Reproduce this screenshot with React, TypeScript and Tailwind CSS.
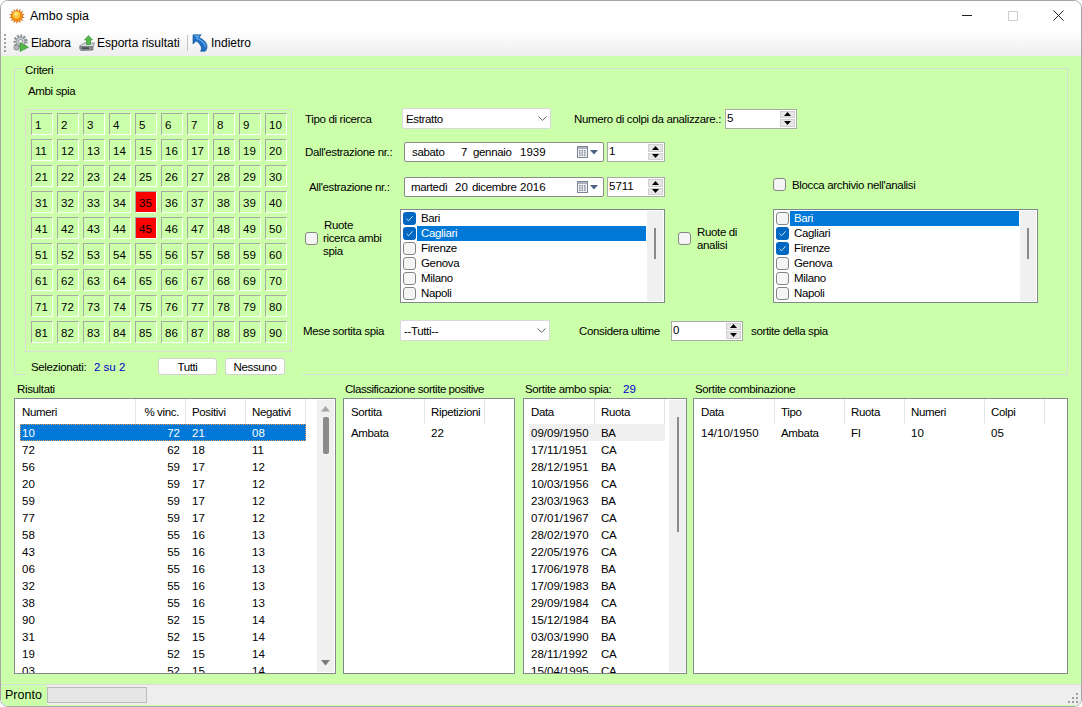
import React from "react";

const FONT = "font-['Liberation_Sans',Arial,sans-serif]";

function Sun() {
  const rays = Array.from({ length: 14 }, (_, i) => (i * 360) / 14);
  return (
    <svg width="16" height="16" viewBox="0 0 16 16">
      {rays.map((a) => (
        <polygon key={a} points="8,0 9.2,3.5 6.8,3.5" fill="#c9660f" transform={`rotate(${a} 8 8)`} />
      ))}
      <circle cx="8" cy="8" r="5.6" fill="#f08a14" />
      <circle cx="7.5" cy="7" r="3.7" fill="#ffc83a" />
      <circle cx="7" cy="6" r="1.8" fill="#ffe58a" />
    </svg>
  );
}

function Gears() {
  return (
    <svg width="16" height="18" viewBox="0 0 16 18">
      <circle cx="7.5" cy="7.5" r="5.8" fill="none" stroke="#8d9297" strokeWidth="2.6" strokeDasharray="2 1.3" />
      <circle cx="7.5" cy="7.5" r="4.5" fill="#c6cacd" stroke="#7a8085" strokeWidth="0.8" />
      <circle cx="7.5" cy="7.5" r="2" fill="#f4f4f4" stroke="#6d7276" strokeWidth="0.6" />
      <circle cx="3.5" cy="13.5" r="2.6" fill="#b3b7ba" stroke="#7a8085" strokeWidth="0.8" />
      <polygon points="7,8.8 15.5,13.2 7,17.5" fill="#55b947" stroke="#2f8a2c" strokeWidth="0.6" />
    </svg>
  );
}

function ExportIcon() {
  return (
    <svg width="16" height="18" viewBox="0 0 16 18">
      <polygon points="0.5,12 5,9 15.5,9 14,13 2,14" fill="#d5d8da" stroke="#6e7478" strokeWidth="0.7" />
      <polygon points="0.8,12.5 14,12.8 14,16 2,16.5 0.8,15" fill="#8a9094" stroke="#555b5f" strokeWidth="0.6" />
      <rect x="3" y="13.5" width="7" height="1.2" fill="#2f3336" />
      <polygon points="9.5,1.5 13.5,6 11.5,6 11.5,10.5 7.5,10.5 7.5,6 5.5,6" fill="#55b947" stroke="#2f8a2c" strokeWidth="0.6" />
    </svg>
  );
}

function BackIcon() {
  return (
    <svg width="16" height="18" viewBox="0 0 16 18">
      <path d="M1 0.8 L9.2 0.8 L7 3.4 C11.5 5.5 15 8.5 15 12.5 C15 14.5 14.4 16 13.2 17.3 L8.6 17.3 C10.6 14 9 10.5 4.2 7 L1 10 Z" fill="#1f6fc4" stroke="#124f96" strokeWidth="0.6" />
      <path d="M2.2 2 L6.6 2 L4.6 4.2 C9 6 13.2 9 13.4 13" fill="none" stroke="#6db4ee" strokeWidth="1.1" />
    </svg>
  );
}

function Check({ on = false }: { on?: boolean }) {
  return on ? (
    <span className="w-[13px] h-[13px] shrink-0 rounded-[3px] bg-[#0067c0] flex items-center justify-center">
      <svg width="9" height="9" viewBox="0 0 9 9">
        <path d="M1.5 4.8 L3.6 6.8 L7.6 2.2" fill="none" stroke="#dbe9f7" strokeWidth="0.9" />
      </svg>
    </span>
  ) : (
    <span className="block w-[13px] h-[13px] shrink-0 rounded-[3px] bg-[#f5f5f5] border border-[#858585]" />
  );
}

function Spin({ value, w }: { value: string; w: string }) {
  return (
    <div className={`${w} h-[20px] bg-white border border-[#a9a9a9] flex tracking-normal`}>
      <span className="flex-1 pl-[1px] leading-[14px] pt-[1px]">{value}</span>
      <div className="w-[15px] mr-[1px] my-[1px] flex flex-col gap-[1px]">
        <div className="flex-1 bg-[#e6e6e6] border border-[#d0d0d0] flex items-center justify-center">
          <svg width="7" height="4" viewBox="0 0 7 4"><polygon points="3.5,0 7,4 0,4" fill="#000" /></svg>
        </div>
        <div className="flex-1 bg-[#e6e6e6] border border-[#d0d0d0] flex items-center justify-center">
          <svg width="7" height="4" viewBox="0 0 7 4"><polygon points="0,0 7,0 3.5,4" fill="#000" /></svg>
        </div>
      </div>
    </div>
  );
}

function Combo({ value, w }: { value: string; w: string }) {
  return (
    <div className={`${w} h-[21px] bg-white border border-[#d9d9d9] rounded-[2px] flex items-center pl-[3px] pr-[3px] justify-between`}>
      <span>{value}</span>
      <svg width="9" height="5" viewBox="0 0 9 5"><path d="M0.5 0.5 L4.5 4.3 L8.5 0.5" fill="none" stroke="#606060" strokeWidth="1" /></svg>
    </div>
  );
}

function DateBox({ children, pl }: { children: React.ReactNode; pl: string }) {
  return (
    <div className={`w-[200px] h-[20px] bg-white border border-[#8a8a8a] rounded-[2px] flex items-center ${pl}`}>
      {children}
      <svg width="12" height="12" viewBox="0 0 12 12" className="ml-auto">
        <rect x="0.5" y="0.5" width="10" height="11" fill="#eef0f3" stroke="#7d8690" />
        <rect x="1" y="1" width="9" height="2" fill="#aab3bd" />
        {[2, 4.5, 7].map((x) => [4, 6.2, 8.4].map((y) => <rect key={`${x}${y}`} x={x} y={y} width="1.6" height="1.5" fill="#8a94a0" />))}
      </svg>
      <svg width="8" height="5" viewBox="0 0 8 5" className="ml-[1px] mr-[5px]"><polygon points="0,0 8,0 4,4.5" fill="#4d6185" /></svg>
    </div>
  );
}

const WHEELS = ["Bari", "Cagliari", "Firenze", "Genova", "Milano", "Napoli"];

function CheckList({ checked, selected }: { checked: string[]; selected: string }) {
  return (
    <div className="w-[265px] h-[94px] bg-white border border-[#828790] flex p-[1px]">
      <div className="flex-1 flex flex-col">
        {WHEELS.map((n) => (
          <div key={n} className="h-[15px] flex items-center pl-[1px] gap-[1px]">
            <Check on={checked.includes(n)} />
            <span className={`flex-1 h-[15px] leading-[15px] pl-[4px] ${selected === n ? "bg-[#0078d7] text-white" : ""}`}>{n}</span>
          </div>
        ))}
      </div>
      <div className="w-[16px] ml-[1px] bg-[#f0f0f0] flex justify-center">
        <div className="w-[2px] h-[31px] mt-[17px] bg-[#8a8a8a]" />
      </div>
    </div>
  );
}

function NumberGrid() {
  const nums = Array.from({ length: 90 }, (_, i) => i + 1);
  return (
    <div className="w-[267px] h-[243px] border border-[#dcdcdc] mt-[11px] pl-[5px] pt-[3px] grid grid-cols-[repeat(10,22px)] grid-rows-[repeat(9,22px)] gap-x-[4px] gap-y-[4px] tracking-normal">
      {nums.map((n) => (
        <div
          key={n}
          className={`border-t border-l border-t-[#a8a8a8] border-l-[#a8a8a8] border-r border-b border-r-white border-b-white pl-[3px] pt-[2px] flex items-center ${n === 35 || n === 45 ? "bg-[#ff0000]" : ""}`}
        >
          {n}
        </div>
      ))}
    </div>
  );
}

type Col = { label: string; w: string; right?: boolean };

function Header({ cols }: { cols: Col[] }) {
  return (
    <div className="flex h-[25px]">
      {cols.map((c, j) => (
        <div key={c.label} className={`${c.w} shrink-0 border-r border-[#e5e5e5] flex items-center pt-[1px] ${j === 0 ? "pl-[2px] pr-[6px]" : "px-[6px]"} ${c.right ? "justify-end" : ""}`}>
          {c.label}
        </div>
      ))}
    </div>
  );
}

function Rows({ cols, rows, sel, inactive }: { cols: Col[]; rows: string[][]; sel?: number; inactive?: boolean }) {
  return (
    <div className="flex flex-col">
      {rows.map((r, i) => {
        const active = sel === i && !inactive;
        const ghost = sel === i && inactive;
        return (
          <div key={i} className={`flex h-[17px] shrink-0 w-fit ${active ? "bg-[#0078d7] text-white outline-1 outline-dotted outline-offset-[-1px] outline-[#d99a5a]" : ""} ${ghost ? "bg-[#f0f0f0]" : ""}`}>
            {r.map((v, j) => (
              <div key={j} className={`${cols[j].w} shrink-0 ${j === 0 ? "pl-[2px] pr-[6px]" : "px-[6px]"} pt-[1px] leading-[16px] flex ${cols[j].right ? "justify-end" : ""} ${/^[\d/]+$/.test(v) ? "tracking-normal" : ""}`}>
                {v}
              </div>
            ))}
          </div>
        );
      })}
    </div>
  );
}

const RES_COLS: Col[] = [
  { label: "Numeri", w: "w-[116px]" },
  { label: "% vinc.", w: "w-[50px]", right: true },
  { label: "Positivi", w: "w-[60px]" },
  { label: "Negativi", w: "w-[60px]" },
];
const RES = [
  ["10", "72", "21", "08"], ["72", "62", "18", "11"], ["56", "59", "17", "12"], ["20", "59", "17", "12"],
  ["59", "59", "17", "12"], ["77", "59", "17", "12"], ["58", "55", "16", "13"], ["43", "55", "16", "13"],
  ["06", "55", "16", "13"], ["32", "55", "16", "13"], ["38", "55", "16", "13"], ["90", "52", "15", "14"],
  ["31", "52", "15", "14"], ["19", "52", "15", "14"], ["03", "52", "15", "14"],
];
const CL_COLS: Col[] = [
  { label: "Sortita", w: "w-[76px]" },
  { label: "Ripetizioni", w: "w-[60px]" },
];
const AMB_COLS: Col[] = [
  { label: "Data", w: "w-[66px]" },
  { label: "Ruota", w: "w-[70px]" },
];
const AMB = [
  ["09/09/1950", "BA"], ["17/11/1951", "CA"], ["28/12/1951", "BA"], ["10/03/1956", "CA"], ["23/03/1963", "BA"],
  ["07/01/1967", "CA"], ["28/02/1970", "CA"], ["22/05/1976", "CA"], ["17/06/1978", "BA"], ["17/09/1983", "BA"],
  ["29/09/1984", "CA"], ["15/12/1984", "BA"], ["03/03/1990", "BA"], ["28/11/1992", "CA"], ["15/04/1995", "CA"],
];
const CMB_COLS: Col[] = [
  { label: "Data", w: "w-[76px]" },
  { label: "Tipo", w: "w-[70px]" },
  { label: "Ruota", w: "w-[60px]" },
  { label: "Numeri", w: "w-[80px]" },
  { label: "Colpi", w: "w-[60px]" },
];

export default function App() {
  return (
    <div className={`${FONT} w-[1082px] h-[707px] overflow-hidden flex flex-col bg-white border border-[#a6a6a6] rounded-[8px] text-[11.5px] leading-[14px] tracking-[-0.35px] whitespace-nowrap text-black`}>
      {/* title bar */}
      <div className="h-[29px] shrink-0 flex items-center pl-[8px] bg-white tracking-normal">
        <Sun />
        <span className="ml-[5px] text-[12.5px]">Ambo spia</span>
        <div className="ml-auto flex items-center">
          <div className="w-[46px] flex justify-center"><div className="w-[10px] h-[1px] bg-[#222]" /></div>
          <div className="w-[46px] flex justify-center"><div className="w-[10px] h-[10px] border border-[#cfcfcf]" /></div>
          <div className="w-[45px] flex justify-center">
            <svg width="11" height="11" viewBox="0 0 11 11"><path d="M0.5 0.5 L10.5 10.5 M10.5 0.5 L0.5 10.5" stroke="#222" strokeWidth="1" /></svg>
          </div>
        </div>
      </div>
      {/* toolbar */}
      <div className="h-[26px] shrink-0 flex items-center bg-gradient-to-b from-[#ffffff] to-[#eeeeee] pl-[3px] text-[12px] tracking-normal">
        <div className="w-[3px] h-[18px] mr-[6px] border-l-2 border-dotted border-[#a0a0a0]" />
        <Gears />
        <span className="ml-[2px] w-[39px] tracking-[-0.25px]">Elabora</span>
        <span className="ml-[9px]"><ExportIcon /></span>
        <span className="ml-[2px] w-[81px]">Esporta risultati</span>
        <div className="w-[1px] h-[16px] bg-[#c4c4c4] ml-[9px] mr-[4px]" />
        <BackIcon />
        <span className="ml-[3px]">Indietro</span>
      </div>
      {/* body */}
      <div className="flex-1 min-h-0 bg-[#ccffaa] flex flex-col px-[13px] pt-[12px]">
        {/* Criteri group */}
        <div className="relative h-[307px] border border-[#d8dcd8] shrink-0 flex pl-[10px]">
          <span className="absolute -top-[6px] left-[8px] px-[2px] z-20 bg-[#ccffaa]">Criteri</span>
          <div className="w-[277px] -mb-[3px] bg-[#ccffaa] z-10 shrink-0 flex flex-col">
            <span className="mt-[15px] ml-[3px]">Ambi spia</span>
            <NumberGrid />
            <div className="flex items-center h-[17px] mt-[6px] pl-[6px]">
              <span className="w-[63px] shrink-0">Selezionati:</span>
              <span className="w-[64px] shrink-0 text-[#0000cc] tracking-normal">2 su 2</span>
              <button className="w-[59px] h-[17px] shrink-0 bg-white border border-[#d0d0d0] rounded-[3px]">Tutti</button>
              <button className="ml-[8px] w-[60px] h-[17px] shrink-0 bg-white border border-[#d0d0d0] rounded-[3px]">Nessuno</button>
            </div>
          </div>
          <div className="flex-1 min-w-0 flex flex-col pt-[39px]">
            <div className="flex items-center h-[21px] ml-[3px] [&>*]:shrink-0">
              <span className="w-[97px]">Tipo di ricerca</span>
              <Combo value="Estratto" w="w-[149px]" />
              <span className="ml-[23px] w-[151px]">Numero di colpi da analizzare.:</span>
              <Spin value="5" w="w-[72px]" />
            </div>
            <div className="flex items-center h-[20px] mt-[13px] ml-[3px] [&>*]:shrink-0">
              <span className="w-[99px]">Dall'estrazione nr.:</span>
              <DateBox pl="pl-[7px]">
                <span className="w-[49px] shrink-0">sabato</span>
                <span className="w-[12px] shrink-0 tracking-normal">7</span>
                <span className="w-[47px] shrink-0">gennaio</span>
                <span className="tracking-normal">1939</span>
              </DateBox>
              <span className="ml-[3px]"><Spin value="1" w="w-[58px]" /></span>
            </div>
            <div className="flex items-center h-[20px] mt-[15px] ml-[7px] [&>*]:shrink-0">
              <span className="w-[95px]">All'estrazione nr.:</span>
              <DateBox pl="pl-[6px]">
                <span className="w-[44px] shrink-0">martedì</span>
                <span className="w-[17px] shrink-0 tracking-normal">20</span>
                <span className="w-[48px] shrink-0">dicembre</span>
                <span className="tracking-normal">2016</span>
              </DateBox>
              <span className="ml-[3px]"><Spin value="5711" w="w-[58px]" /></span>
              <span className="ml-[108px] -mt-[6px]"><Check /></span>
              <span className="ml-[6px] -mt-[5px]">Blocca archivio nell'analisi</span>
            </div>
            <div className="flex items-start h-[94px] mt-[12px] ml-[3px] [&>*]:shrink-0">
              <span className="mt-[23px]"><Check /></span>
              <span className="w-[77px] ml-[5px] mt-[10px] leading-[13px]"><span className="ml-[1px]">Ruote</span><br />ricerca ambi<br />spia</span>
              <CheckList checked={["Bari", "Cagliari"]} selected="Cagliari" />
              <span className="ml-[13px] mt-[23px]"><Check /></span>
              <span className="w-[76px] ml-[6px] mt-[17px] leading-[13px]">Ruote di<br />analisi</span>
              <CheckList checked={["Cagliari", "Firenze"]} selected="Bari" />
            </div>
            <div className="flex items-center h-[21px] mt-[17px] ml-[1px] [&>*]:shrink-0">
              <span className="w-[97px]">Mese sortita spia</span>
              <Combo value="--Tutti--" w="w-[150px]" />
              <span className="ml-[29px] w-[92px]">Considera ultime</span>
              <Spin value="0" w="w-[72px]" />
              <span className="ml-[8px]">sortite della spia</span>
            </div>
          </div>
        </div>
        {/* results */}
        <div className="flex mt-[7px] flex-1 min-h-0 pb-[10px]">
          <div className="w-[322px] shrink-0 flex flex-col">
            <span className="h-[16px] ml-[3px] shrink-0">Risultati</span>
            <div className="flex-1 min-h-0 bg-white border border-[#828790] flex overflow-hidden pl-[5px]">
              <div className="flex-1 min-w-0 overflow-hidden">
                <Header cols={RES_COLS} />
                <Rows cols={RES_COLS} rows={RES} sel={0} />
              </div>
              <div className="w-[17px] mr-[1px] my-[1px] bg-[#f0f0f0] flex flex-col items-center shrink-0">
                <svg width="9" height="6" viewBox="0 0 9 6" className="mt-[6px]"><polygon points="4.5,0 9,5.5 0,5.5" fill="#a6a6a6" /></svg>
                <div className="w-[6px] h-[37px] mt-[5px] bg-[#8a8a8a] rounded-[2px]" />
                <svg width="9" height="6" viewBox="0 0 9 6" className="mt-auto mb-[6px]"><polygon points="0,0 9,0 4.5,5.5" fill="#7a7a7a" /></svg>
              </div>
            </div>
          </div>
          <div className="w-[172px] ml-[7px] shrink-0 flex flex-col">
            <span className="h-[16px] ml-[2px] shrink-0 tracking-[-0.45px]">Classificazione sortite positive</span>
            <div className="flex-1 min-h-0 bg-white border border-[#828790] overflow-hidden pl-[5px]">
              <Header cols={CL_COLS} />
              <Rows cols={CL_COLS} rows={[["Ambata", "22"]]} />
            </div>
          </div>
          <div className="w-[164px] ml-[8px] shrink-0 flex flex-col">
            <div className="h-[16px] ml-[2px] shrink-0 flex">
              <span className="w-[98px]">Sortite ambo spia:</span>
              <span className="text-[#0000cc] tracking-normal">29</span>
            </div>
            <div className="flex-1 min-h-0 bg-white border border-[#828790] flex overflow-hidden pl-[5px]">
              <div className="flex-1 min-w-0 overflow-hidden">
                <Header cols={AMB_COLS} />
                <Rows cols={AMB_COLS} rows={AMB} sel={0} inactive />
              </div>
              <div className="w-[17px] my-[1px] bg-[#f0f0f0] flex justify-center shrink-0">
                <div className="w-[2px] h-[115px] mt-[17px] bg-[#8a8a8a]" />
              </div>
            </div>
          </div>
          <div className="flex-1 ml-[6px] min-w-0 flex flex-col">
            <span className="h-[16px] ml-[2px] shrink-0">Sortite combinazione</span>
            <div className="flex-1 min-h-0 bg-white border border-[#828790] overflow-hidden pl-[5px]">
              <Header cols={CMB_COLS} />
              <Rows cols={CMB_COLS} rows={[["14/10/1950", "Ambata", "FI", "10", "05"]]} />
            </div>
          </div>
        </div>
      </div>
      {/* status */}
      <div className="h-[22px] shrink-0 bg-[#eeeeee] border-t border-t-[#dcdcdc] border-b border-b-[#ccffaa] flex items-center relative">
        <div className="w-[46px] h-full bg-[#ccffaa] flex items-center pl-[4px] rounded-bl-[6px] text-[12.5px] tracking-normal">Pronto</div>
        <div className="w-[100px] h-[16px] bg-[#e6e6e6] border border-[#bcbcbc]" />
        <svg width="12" height="12" viewBox="0 0 12 12" className="absolute right-[2px] bottom-[1px]">
          {[[9, 1], [9, 5], [5, 5], [9, 9], [5, 9], [1, 9]].map(([x, y]) => (
            <rect key={`${x}-${y}`} x={x} y={y} width="2" height="2" fill="#a0a0a0" />
          ))}
        </svg>
      </div>
    </div>
  );
}
